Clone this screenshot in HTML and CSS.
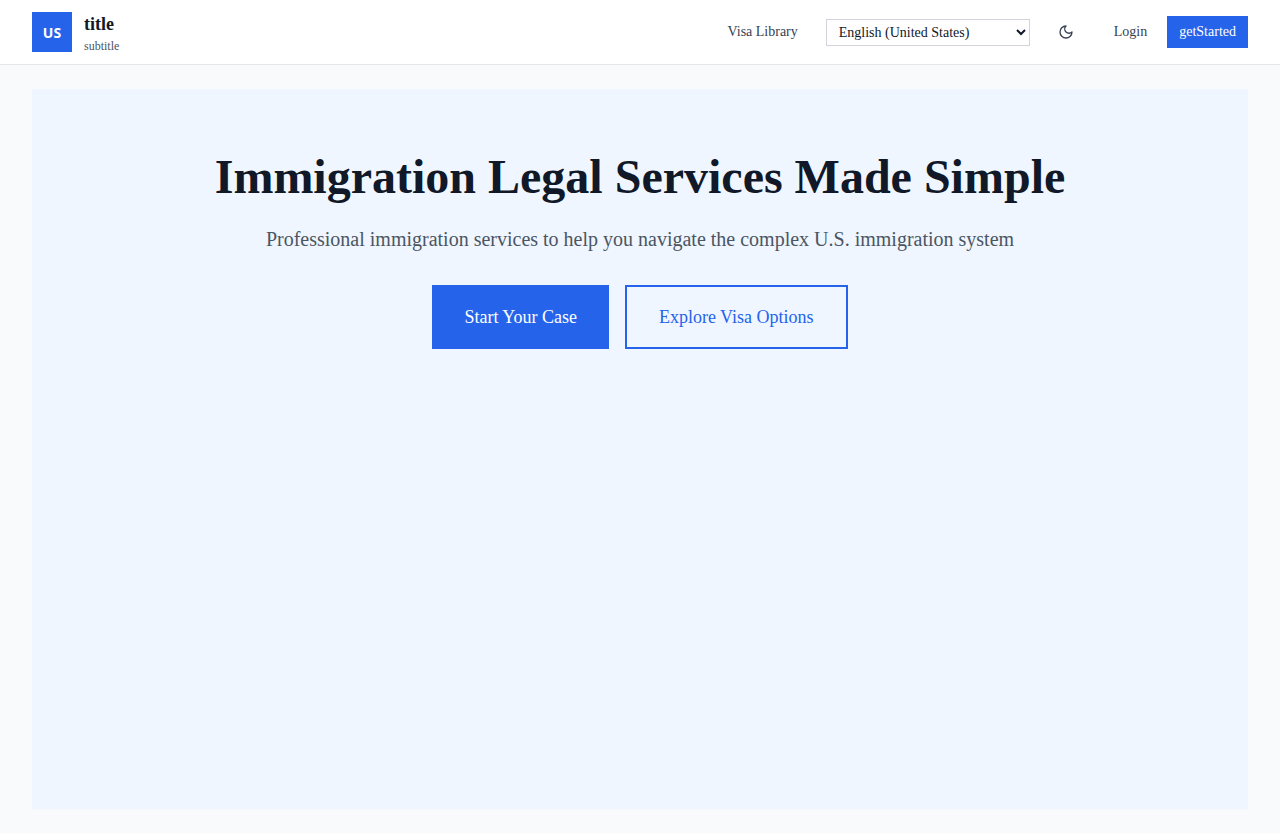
FILE: index.html
```html
<!DOCTYPE html>
<html lang="en">
<head>
<meta charset="utf-8">
<meta name="viewport" content="width=device-width, initial-scale=1">
<title>Immigration Legal Services</title>
<link rel="stylesheet" href="styles.css">
</head>
<body>
<header class="header">
  <div class="brand">
    <div class="logo">US</div>
    <div class="brand-text">
      <span class="brand-title">title</span>
      <span class="brand-subtitle">subtitle</span>
    </div>
  </div>
  <nav class="nav">
    <a class="nav-link" href="#visas">Visa Library</a>
    <select class="language" aria-label="Language">
      <option>English (United States)</option>
      <option>Español</option>
    </select>
    <button class="theme-toggle" type="button" aria-label="Toggle dark mode">
      <svg class="icon" viewBox="0 0 24 24" fill="none" stroke="currentColor" stroke-width="2" stroke-linecap="round" stroke-linejoin="round" aria-hidden="true"><path d="M12 3a6 6 0 0 0 9 9 9 9 0 1 1-9-9Z"/></svg>
    </button>
    <div class="account">
      <a class="nav-link" href="#login">Login</a>
      <a class="signup" href="#start">getStarted</a>
    </div>
  </nav>
</header>
<main class="main">
  <section class="hero">
    <h1 class="hero-title">Immigration Legal Services Made Simple</h1>
    <p class="hero-text">Professional immigration services to help you navigate the complex U.S. immigration system</p>
    <div class="actions">
      <button class="button button-primary" type="button">Start Your Case</button>
      <button class="button button-outline" type="button">Explore Visa Options</button>
    </div>
  </section>
</main>
</body>
</html>
```

FILE: styles.css
```css
* {
  box-sizing: border-box;
}

body {
  margin: 0;
  min-height: 100vh;
  display: flex;
  flex-direction: column;
  background: #f9fafb;
  color: #111827;
  font-family: "Liberation Serif", "Times New Roman", serif;
}

.header {
  display: flex;
  align-items: center;
  justify-content: space-between;
  min-height: 65px;
  padding: 0 32px;
  background: #ffffff;
  border-bottom: 1px solid #e5e7eb;
}

.brand {
  display: flex;
  align-items: center;
  gap: 12px;
}

.logo {
  display: flex;
  align-items: center;
  justify-content: center;
  width: 40px;
  height: 40px;
  background: #2563eb;
  color: #ffffff;
  font: bold 14px "Open Sans", sans-serif;
}

.brand-text {
  display: flex;
  flex-direction: column;
  padding-top: 6px;
}

.brand-title {
  font-size: 18px;
  font-weight: bold;
  line-height: 22px;
}

.brand-subtitle {
  color: #4b5563;
  font-size: 12px;
  line-height: 22px;
}

.nav {
  display: flex;
  align-items: center;
}

.nav-link {
  padding: 8px 12px;
  color: #374151;
  font-size: 14px;
  line-height: 16px;
  text-decoration: none;
}

.language {
  width: 204px;
  height: 27px;
  margin: 0 16px;
  padding: 0 8px;
  border: 1px solid #d1d5db;
  border-radius: 0;
  background: #ffffff;
  color: #111827;
  font-family: inherit;
  font-size: 14px;
}

.theme-toggle {
  display: flex;
  padding: 12px;
  border: 0;
  background: none;
  color: #374151;
}

.icon {
  width: 16px;
  height: 16px;
}

.account {
  display: flex;
  align-items: center;
  gap: 8px;
  margin-left: 16px;
}

.signup {
  padding: 8px 12px;
  background: #2563eb;
  color: #ffffff;
  font-size: 14px;
  line-height: 16px;
  text-decoration: none;
}

.main {
  flex: 1;
  display: flex;
  padding: 24px 32px;
}

.hero {
  flex: 1;
  padding: 64px 32px;
  background: #eff6ff;
  text-align: center;
}

.hero-title {
  margin: 0 0 24px;
  font-size: 48px;
  line-height: 48px;
}

.hero-text {
  margin: 0 0 32px;
  color: #4b5563;
  font-size: 20px;
  line-height: 28px;
}

.actions {
  display: flex;
  flex-wrap: wrap;
  justify-content: center;
  gap: 16px;
}

.button {
  padding: 16px 32px;
  border: 2px solid #2563eb;
  font-family: inherit;
  font-size: 18px;
  line-height: 28px;
}

.button-primary {
  border-width: 2px 0;
  background: #2563eb;
  color: #ffffff;
}

.button-outline {
  background: transparent;
  color: #2563eb;
}
```
